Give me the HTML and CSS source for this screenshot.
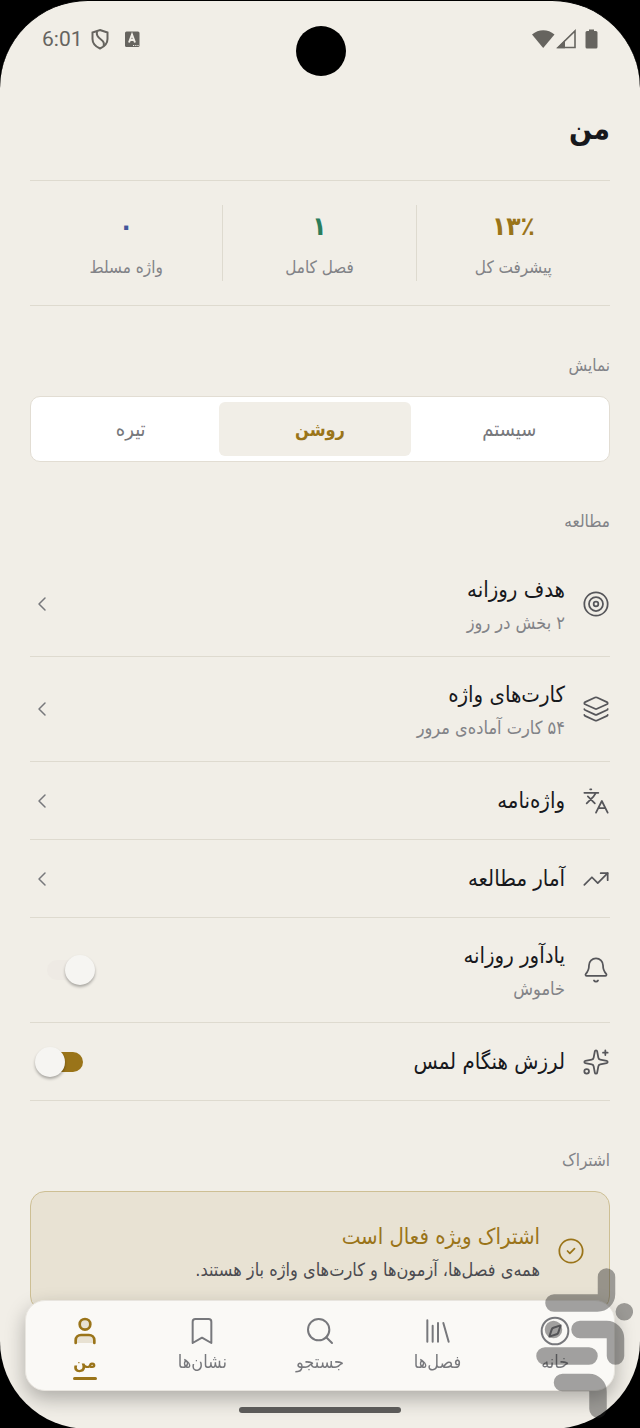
FILE: index.html
```
<!DOCTYPE html>
<html lang="fa" dir="rtl">
<head>
  <meta charset="UTF-8" />
  <meta name="viewport" content="width=device-width, initial-scale=1.0"/>
  <title>من</title>
  <link rel="stylesheet" href="styles.css">
</head>
<body>
  <div class="screen">
    <div class="status-bar" dir="ltr">
      <div class="status-group">
        <span class="clock">6:01</span>
        <svg class="status-icon" viewBox="0 0 22 22" fill="none" stroke="currentColor" stroke-width="2"><path d="M11 2 18.500 4.500V11c0 4-3 7.500-7.500 9.500C6.500 18.500 3.500 15 3.500 11V4.500z"/><path d="M8 3.500c-1 4 1 6 4 8s3.500 4 2.500 6.500"/></svg>
        <svg class="status-icon app-icon" viewBox="0 0 22 22"><rect x="4" y="3.500" width="14.500" height="15.500" rx="1.500" fill="currentColor"/><path d="M8 14.500 11 6.500l3 8M9 12h4" fill="none" stroke="#f1eee7" stroke-width="2"/><path d="M12 17.500h6" stroke="#f1eee7" stroke-width="1.200" stroke-dasharray="1.200 1"/></svg>
      </div>
      <div class="camera"></div>
      <div class="status-group end">
        <svg class="signal" viewBox="0 0 68 22" fill="currentColor"><path d="M0 6.500C6.500.700 16 .700 22.500 6.500L11.200 20z"/><path d="M26 19.500 43 3v16.500z" fill="none" stroke="currentColor" stroke-width="1.600"/><path d="M25 20.200 33 12v8.200z"/><path d="M57 3V1.500h5V3h2q1.500 0 1.500 1.500v14.500q0 1.500-1.500 1.500h-9q-1.500 0-1.500-1.500V4.500Q53.500 3 55 3z"/></svg>
      </div>
    </div>

    <main class="content">
      <h1>من</h1>

      <div class="stats">
        <div class="stat gold"><strong>۱۳٪</strong><span>پیشرفت کل</span></div>
        <div class="stat green"><strong>۱</strong><span>فصل کامل</span></div>
        <div class="stat blue"><strong>۰</strong><span>واژه مسلط</span></div>
      </div>

      <h2>نمایش</h2>
      <div class="segmented">
        <button type="button">سیستم</button>
        <button type="button" class="selected">روشن</button>
        <button type="button">تیره</button>
      </div>

      <h2>مطالعه</h2>
      <div class="list">
        <button type="button" class="row">
          <svg class="icon" viewBox="0 0 24 24"><circle cx="12" cy="12" r="10"/><circle cx="12" cy="12" r="6"/><circle cx="12" cy="12" r="2"/></svg>
          <span class="row-text"><span class="title">هدف روزانه</span><span class="sub">۲ بخش در روز</span></span>
          <svg class="icon chevron" viewBox="0 0 24 24"><path d="m15 18-6-6 6-6"/></svg>
        </button>
        <button type="button" class="row">
          <svg class="icon" viewBox="0 0 24 24"><path d="M12.830 2.180a2 2 0 0 0-1.660 0L2.600 6.080a1 1 0 0 0 0 1.830l8.580 3.910a2 2 0 0 0 1.660 0l8.580-3.900a1 1 0 0 0 0-1.830z"/><path d="M2 12a1 1 0 0 0 .580.910l8.600 3.910a2 2 0 0 0 1.650 0l8.580-3.900A1 1 0 0 0 22 12"/><path d="M2 17a1 1 0 0 0 .580.910l8.600 3.910a2 2 0 0 0 1.650 0l8.580-3.900A1 1 0 0 0 22 17"/></svg>
          <span class="row-text"><span class="title">کارت‌های واژه</span><span class="sub">۵۴ کارت آماده‌ی مرور</span></span>
          <svg class="icon chevron" viewBox="0 0 24 24"><path d="m15 18-6-6 6-6"/></svg>
        </button>
        <button type="button" class="row">
          <svg class="icon" viewBox="0 0 24 24"><path d="m5 8 6 6M4 14l6-6 2-3M2 5h12M7 2h1M22 22l-5-10-5 10M14 18h6"/></svg>
          <span class="row-text"><span class="title">واژه‌نامه</span></span>
          <svg class="icon chevron" viewBox="0 0 24 24"><path d="m15 18-6-6 6-6"/></svg>
        </button>
        <button type="button" class="row">
          <svg class="icon" viewBox="0 0 24 24"><path d="m22 7-8.500 8.500-5-5L2 17"/><path d="M16 7h6v6"/></svg>
          <span class="row-text"><span class="title">آمار مطالعه</span></span>
          <svg class="icon chevron" viewBox="0 0 24 24"><path d="m15 18-6-6 6-6"/></svg>
        </button>
        <label class="row" for="reminder">
          <svg class="icon" viewBox="0 0 24 24"><path d="M10.268 21a2 2 0 0 0 3.464 0"/><path d="M3.262 15.326A1 1 0 0 0 4 17h16a1 1 0 0 0 .740-1.673C19.410 13.956 18 12.499 18 8A6 6 0 0 0 6 8c0 4.499-1.411 5.956-2.738 7.326"/></svg>
          <span class="row-text"><span class="title">یادآور روزانه</span><span class="sub">خاموش</span></span>
          <input type="checkbox" class="switch" id="reminder">
        </label>
        <label class="row" for="haptics">
          <svg class="icon" viewBox="0 0 24 24"><path d="M11.017 2.814a1 1 0 0 1 1.966 0l1.051 5.558a2 2 0 0 0 1.594 1.594l5.558 1.051a1 1 0 0 1 0 1.966l-5.558 1.051a2 2 0 0 0-1.594 1.594l-1.051 5.558a1 1 0 0 1-1.966 0l-1.051-5.558a2 2 0 0 0-1.594-1.594l-5.558-1.051a1 1 0 0 1 0-1.966l5.558-1.051a2 2 0 0 0 1.594-1.594z"/><path d="M20 2v4M22 4h-4"/><circle cx="4" cy="20" r="2"/></svg>
          <span class="row-text"><span class="title">لرزش هنگام لمس</span></span>
          <input type="checkbox" class="switch" id="haptics" checked>
        </label>
      </div>

      <h2>اشتراک</h2>
      <div class="plan">
        <svg class="icon" viewBox="0 0 24 24"><circle cx="12" cy="12" r="10"/><path d="m9 12 2 2 4-4"/></svg>
        <div class="row-text"><span class="title">اشتراک ویژه فعال است</span><span class="sub">همه‌ی فصل‌ها، آزمون‌ها و کارت‌های واژه باز هستند.</span></div>
      </div>
    </main>

    <nav class="tab-bar">
      <a href="#home"><svg class="icon" viewBox="0 0 24 24"><circle cx="12" cy="12" r="10"/><path d="m16.240 7.760-1.804 5.411a2 2 0 0 1-1.265 1.265L7.760 16.240l1.804-5.411a2 2 0 0 1 1.265-1.265z"/></svg><span>خانه</span></a>
      <a href="#chapters"><svg class="icon" viewBox="0 0 24 24"><path d="m16 6 4 14M12 6v14M8 8v12M4 4v16"/></svg><span>فصل‌ها</span></a>
      <a href="#search"><svg class="icon" viewBox="0 0 24 24"><circle cx="11" cy="11" r="8"/><path d="m21 21-4.340-4.340"/></svg><span>جستجو</span></a>
      <a href="#bookmarks"><svg class="icon" viewBox="0 0 24 24"><path d="m19 21-7-4-7 4V5a2 2 0 0 1 2-2h10a2 2 0 0 1 2 2z"/></svg><span>نشان‌ها</span></a>
      <a href="#me" class="active"><svg class="icon" viewBox="0 0 24 24"><path d="M19 21v-2a4 4 0 0 0-4-4H9a4 4 0 0 0-4 4v2"/><circle cx="12" cy="7" r="4"/></svg><span>من</span></a>
    </nav>
    <div class="home-bar"></div>
  </div>

  <svg class="watermark" viewBox="535 1268 98 150"><path d="M606.500 1277v17a9 9 0 0 1-9 9H554M580 1329.500h26.500a9 9 0 0 1 9 9V1356M545 1356h44M562.500 1382.500H589a9 9 0 0 1 9 9V1409"/><path d="M624.300 1311.700h.010M553.500 1329.500h.010"/></svg>
</body>
</html>
```
FILE: styles.css
```
* {
  box-sizing: border-box;
}

body {
  margin: 0;
  background-color: #000;
  color: #17181c;
  font-family: "DejaVu Sans Condensed", "DejaVu Sans", sans-serif;
}

button,
input {
  font-family: inherit;
  margin: 0;
}

.screen {
  min-height: 100vh;
  border-top: 1px solid #000;
  border-radius: 88px;
  background-color: #f1eee7;
  overflow: hidden;
}

/* status bar */
.status-bar {
  display: grid;
  grid-template-columns: 1fr 50px 1fr;
  align-items: center;
  height: 76px;
  padding: 0 40px 0 42px;
  color: #66645f;
}

.status-group {
  display: flex;
  align-items: center;
}

.status-group.end {
  justify-content: flex-end;
}

.clock {
  margin-right: 6px;
  font: 21px/24px Roboto, sans-serif;
}

.status-icon {
  width: 22px;
  height: 22px;
}

.app-icon {
  margin-left: 10px;
}

.signal {
  width: 68px;
  height: 22px;
}

.camera {
  height: 50px;
  margin-top: 24px;
  border-radius: 50%;
  background-color: #000;
}

/* content */
.content {
  padding: 0 30px 118px;
}

h1 {
  margin: 28px 0 27px;
  font-size: 30px;
  line-height: 48px;
  font-weight: bold;
}

h2 {
  margin: 45px 0 17px;
  font-size: 17px;
  line-height: 28px;
  font-weight: normal;
  color: #828387;
}

.stats {
  display: grid;
  grid-template-columns: repeat(3, 1fr);
  padding: 24px 0;
  border-top: 1px solid #dedacf;
  border-bottom: 1px solid #dedacf;
}

.stat {
  display: flex;
  flex-direction: column;
  gap: 6px;
  text-align: center;
}

.stat + .stat {
  border-right: 1px solid #dedacf;
}

.stat strong {
  font-size: 26px;
  line-height: 42px;
}

.stat span {
  font-size: 17px;
  line-height: 28px;
  color: #828387;
}

.gold strong {
  color: #9a7419;
}

.green strong {
  color: #2b7d5c;
}

.blue strong {
  color: #45569b;
}

.segmented {
  position: relative;
  display: flex;
  padding: 5px;
  border: 1px solid #e2ddd3;
  border-radius: 10px;
  background-color: #fff;
}

.segmented::before {
  content: "";
  position: absolute;
  top: 5px;
  bottom: 5px;
  right: calc(100% / 3 + 5px);
  width: calc(100% / 3);
  border-radius: 6px;
  background-color: #f1eee7;
}

.segmented button {
  position: relative;
  flex: 1;
  height: 54px;
  padding: 0;
  border: none;
  background: none;
  color: #77787c;
  font-size: 20px;
}

.segmented .selected {
  color: #9a7419;
  font-size: 18px;
  font-weight: bold;
}

/* settings rows */
.icon {
  flex: none;
  width: 28px;
  height: 28px;
  fill: none;
  stroke: currentColor;
  stroke-width: 1.5;
  stroke-linecap: round;
  stroke-linejoin: round;
}

.row {
  display: flex;
  align-items: center;
  gap: 17px;
  width: 100%;
  min-height: 78px;
  padding: 20px 0;
  border: none;
  border-bottom: 1px solid #dedacf;
  background: none;
  color: #56565a;
  text-align: right;
}

.row-text {
  flex: 1;
  display: flex;
  flex-direction: column;
  gap: 2px;
}

.title {
  font-size: 22px;
  line-height: 35px;
  color: #17181c;
}

.sub {
  font-size: 18px;
  line-height: 27px;
  color: #828387;
}

.chevron {
  width: 24px;
  height: 24px;
  color: #77787c;
}

.switch {
  appearance: none;
  position: relative;
  width: 60px;
  height: 30px;
  margin-left: 5px;
}

.switch::before {
  content: "";
  position: absolute;
  inset: 5px 12px;
  border-radius: 10px;
  background-color: #eeeae4;
}

.switch::after {
  content: "";
  position: absolute;
  top: 0;
  right: 0;
  width: 30px;
  height: 30px;
  border-radius: 50%;
  background-color: #f6f5f2;
  box-shadow: 0 2px 3px rgba(0, 0, 0, 0.3);
}

.switch:checked::before {
  background-color: #9a7419;
}

.switch:checked::after {
  right: auto;
  left: 0;
}

.plan {
  display: flex;
  align-items: center;
  gap: 17px;
  padding: 27px 24px;
  border: 1px solid #cdbf94;
  border-radius: 15px;
  background-color: #e8e2d3;
  color: #9a7419;
}

.plan .title {
  color: #9a7419;
}

.plan .sub {
  color: #4b4b50;
}

/* bottom navigation */
.tab-bar {
  position: fixed;
  right: 25px;
  bottom: 37px;
  left: 25px;
  display: flex;
  height: 91px;
  padding-top: 14px;
  border: 1px solid #e8e5df;
  border-radius: 20px;
  background-color: #faf9f6;
  box-shadow: 0 8px 20px rgba(0, 0, 0, 0.28);
}

.tab-bar a {
  flex: 1;
  display: flex;
  flex-direction: column;
  align-items: center;
  color: #77787c;
  font-size: 18px;
  line-height: 30px;
  text-decoration: none;
}

.tab-bar .icon {
  width: 32px;
  height: 32px;
}

.tab-bar .active {
  color: #9a7419;
  font-size: 17px;
  font-weight: bold;
}

.tab-bar .active .icon {
  fill: #e8e2d3;
  stroke-width: 2;
}

.tab-bar .active::after {
  content: "";
  width: 24px;
  height: 3px;
  border-radius: 2px;
  background-color: #9a7419;
}

.home-bar {
  position: fixed;
  bottom: 15px;
  left: 50%;
  width: 162px;
  height: 6px;
  margin-left: -81px;
  border-radius: 3px;
  background-color: #5b5a58;
}

.watermark {
  position: fixed;
  right: 7px;
  bottom: 10px;
  width: 98px;
  height: 150px;
  fill: none;
  stroke: #282828;
  stroke-width: 17.5;
  stroke-linecap: round;
  opacity: 0.42;
}
```
